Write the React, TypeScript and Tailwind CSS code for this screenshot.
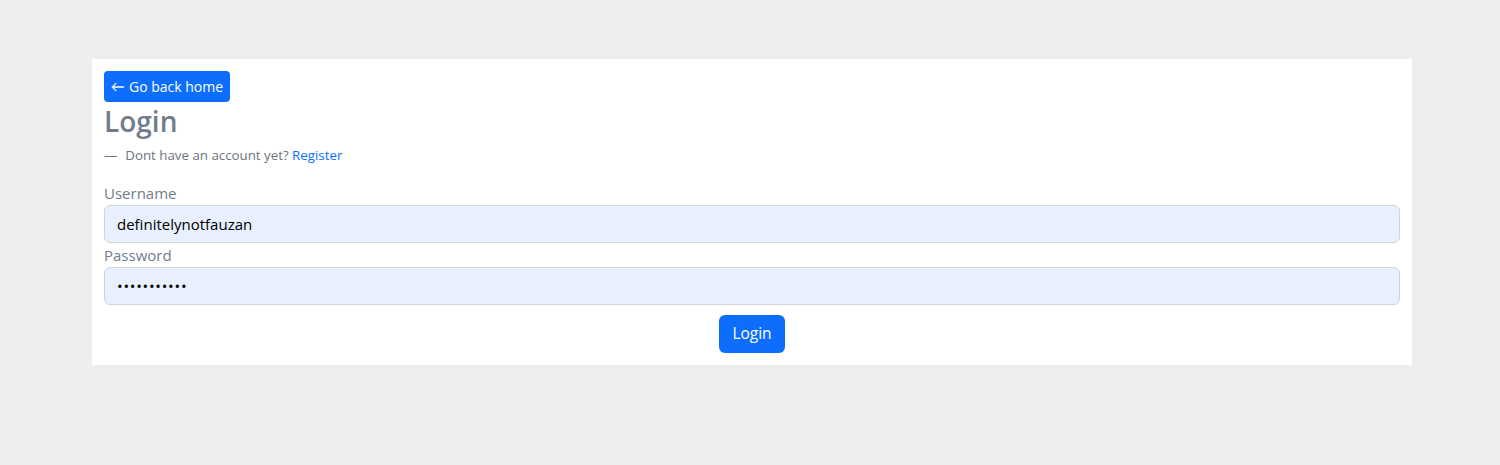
export default function App() {
  return (
    <div className="min-h-[465px] w-full bg-[#eeeeee] pt-[59px] font-['Open_Sans',sans-serif]">
      <div className="ml-[92px] w-[1320px] bg-white px-3 pt-3 pb-[12px]">
        <button className="flex h-[31px] items-center gap-1 rounded-[4px] bg-[#0d6efd] px-[7px] text-[14px] text-white">
          <svg width="14" height="14" viewBox="0 0 16 16" fill="currentColor" stroke="currentColor" strokeWidth="0.6">
            <path
              fillRule="evenodd"
              d="M15 8a.5.5 0 0 0-.5-.5H2.707l3.147-3.146a.5.5 0 1 0-.708-.708l-4 4a.5.5 0 0 0 0 .708l4 4a.5.5 0 0 0 .708-.708L2.707 8.5H14.5A.5.5 0 0 0 15 8"
            />
          </svg>
          Go back home
        </button>
        <h2 className="mt-[1px] text-[28px] leading-[36px] font-semibold text-[#717d8c]">
          Login
        </h2>
        <p className="mt-[6px] text-[13.3px] leading-[20px] text-[#6c757d]">
          <span className="mr-2">—</span>Dont have an account yet?{" "}
          <a href="#" className="text-[#0d6efd]">
            Register
          </a>
        </p>
        <form className="mt-[16px] flex flex-col">
          <label className="text-[15px] leading-[24px] text-[#717d8c]">Username</label>
          <input
            type="text"
            defaultValue="definitelynotfauzan"
            className="h-[38px] rounded-[6px] border border-[#ced4da] bg-[#e8f0fe] px-3 text-[15px] text-black outline-none"
          />
          <label className="text-[15px] leading-[24px] text-[#717d8c]">Password</label>
          <input
            type="password"
            defaultValue="fauzanpass1"
            className="h-[38px] rounded-[6px] border border-[#ced4da] bg-[#e8f0fe] px-3 text-[15px] tracking-[0.75px] text-black outline-none"
          />
          <div className="mt-[10px] flex justify-center">
            <button
              type="button"
              className="h-[38px] rounded-[6px] bg-[#0d6efd] px-[13px] text-[15.5px] text-white"
            >
              Login
            </button>
          </div>
        </form>
      </div>
    </div>
  );
}
